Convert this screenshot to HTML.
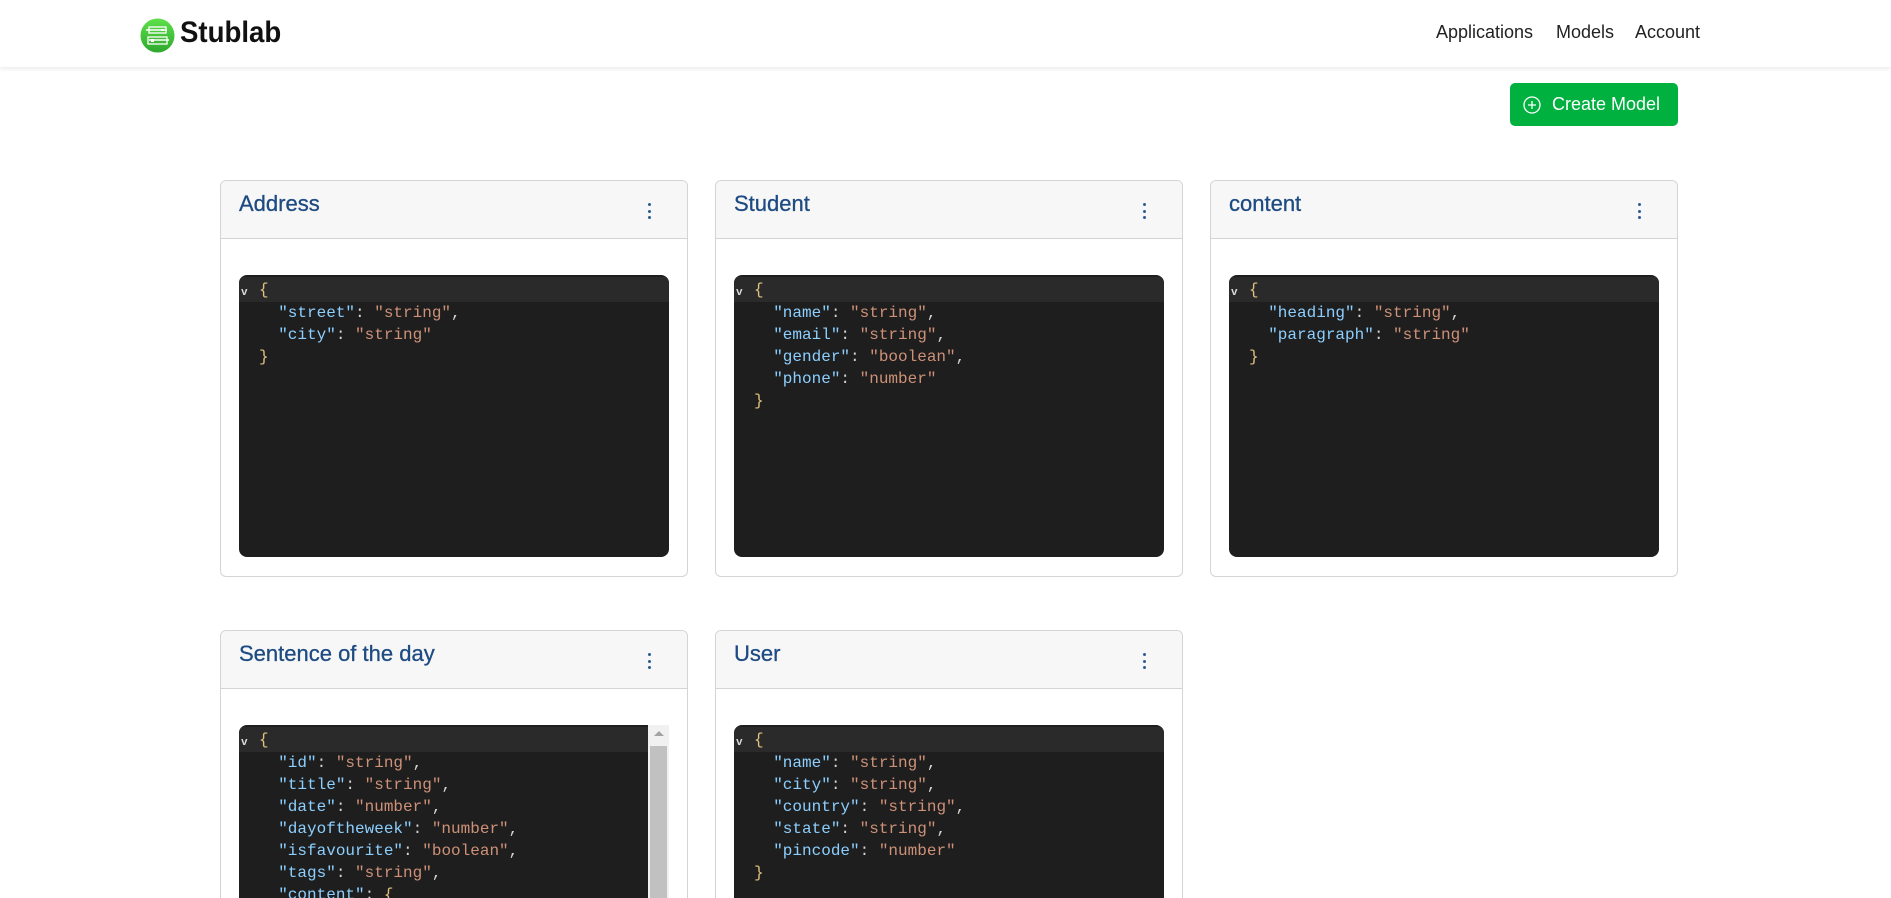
<!DOCTYPE html>
<html><head><meta charset="utf-8"><style>
*{box-sizing:border-box;margin:0;padding:0}
html,body{width:1891px;height:898px;overflow:hidden}
body{background:#fff;font-family:"Liberation Sans",sans-serif;position:relative}
.nav{position:absolute;left:0;top:0;width:1891px;height:67px;background:#fff;box-shadow:0 2px 4px rgba(0,0,0,.08)}
.brand{position:absolute;left:180px;top:16px;font-size:30px;font-weight:bold;color:#111;transform:scaleX(0.92);transform-origin:left}
.links{position:absolute;top:22px;font-size:18px;color:#222}
.btn{position:absolute;left:1510px;top:83px;width:168px;height:43px;background:#00b140;border-radius:5px;color:#fff;font-size:18px;line-height:43px}
.card{position:absolute;width:468px;border:1px solid #d4d4d4;border-radius:6px;overflow:hidden;background:#fff}
.hd{height:58px;background:#f7f7f7;border-bottom:1px solid #d4d4d4;position:relative}
.hd .t{position:absolute;left:18px;top:10px;font-size:22px;color:#1d4b82;-webkit-text-stroke:0.3px #1d4b82}
.keb{position:absolute;left:427px;top:22px;width:3px}
.keb i{display:block;width:3px;height:3px;background:#2b5c92;border-radius:50%;margin-bottom:3.5px}
.ed{position:absolute;left:18px;top:94px;width:430px;height:282px;background:#1e1e1e;border-radius:8px;overflow:hidden;font-family:"Liberation Mono","DejaVu Sans Mono",monospace;font-size:16px;color:#d4d4d4}
.hl{position:absolute;left:0;top:2px;width:100%;height:25px;background:#2a2a2a}
.ln{position:absolute;left:20px;height:22px;line-height:22px;white-space:pre}
.k{color:#8ccfff}.s{color:#ce9178}.b{color:#e0c080}
.ar{position:absolute;left:2px;top:12px;color:#ddd;font-size:11px;font-weight:bold}
</style></head><body>
<div class="nav">
<svg style="position:absolute;left:140px;top:18px" width="35" height="35" viewBox="0 0 35 35">
<defs><linearGradient id="g" x1="0" y1="0" x2="0" y2="1"><stop offset="0" stop-color="#5ee04a"/><stop offset="1" stop-color="#2ea82e"/></linearGradient></defs>
<circle cx="17.5" cy="17.5" r="17" fill="url(#g)"/>
<path d="M6 12 H27 M9 22 H29" stroke="#fff" stroke-width="1.5" fill="none"/>
<rect x="9" y="9" width="17" height="6" fill="none" stroke="#fff" stroke-width="1.3"/>
<rect x="8" y="19" width="19" height="7" fill="none" stroke="#fff" stroke-width="1.3"/>
<rect x="11" y="21" width="3" height="3" fill="#fff"/><rect x="21" y="11" width="3" height="2" fill="#fff"/>
</svg>
<div class="brand">Stublab</div>
<div class="links" style="left:1436px">Applications</div>
<div class="links" style="left:1556px">Models</div>
<div class="links" style="left:1635px">Account</div>
</div>
<div class="btn"><svg style="position:absolute;left:13px;top:13px" width="18" height="18" viewBox="0 0 18 18"><circle cx="9" cy="9" r="8" fill="none" stroke="#fff" stroke-width="1.3"/><path d="M9 5V13M5 9H13" stroke="#fff" stroke-width="1.3"/></svg><span style="position:absolute;left:42px">Create Model</span></div>

<div class="card" style="left:220px;top:180px;height:397px">
<div class="hd"><div class="t">Address</div><div class="keb"><i></i><i></i><i></i></div></div>
<div class="ed"><div class="hl"></div><div class="ar">v</div>
<div class="ln b" style="top:4px">{</div>
<div class="ln" style="top:27px">  <span class="k">"street"</span>: <span class="s">"string"</span>,</div>
<div class="ln" style="top:49px">  <span class="k">"city"</span>: <span class="s">"string"</span></div>
<div class="ln b" style="top:71px">}</div></div>
</div>

<div class="card" style="left:715px;top:180px;height:397px">
<div class="hd"><div class="t">Student</div><div class="keb"><i></i><i></i><i></i></div></div>
<div class="ed"><div class="hl"></div><div class="ar">v</div>
<div class="ln b" style="top:4px">{</div>
<div class="ln" style="top:27px">  <span class="k">"name"</span>: <span class="s">"string"</span>,</div>
<div class="ln" style="top:49px">  <span class="k">"email"</span>: <span class="s">"string"</span>,</div>
<div class="ln" style="top:71px">  <span class="k">"gender"</span>: <span class="s">"boolean"</span>,</div>
<div class="ln" style="top:93px">  <span class="k">"phone"</span>: <span class="s">"number"</span></div>
<div class="ln b" style="top:115px">}</div></div>
</div>

<div class="card" style="left:1210px;top:180px;height:397px">
<div class="hd"><div class="t">content</div><div class="keb"><i></i><i></i><i></i></div></div>
<div class="ed"><div class="hl"></div><div class="ar">v</div>
<div class="ln b" style="top:4px">{</div>
<div class="ln" style="top:27px">  <span class="k">"heading"</span>: <span class="s">"string"</span>,</div>
<div class="ln" style="top:49px">  <span class="k">"paragraph"</span>: <span class="s">"string"</span></div>
<div class="ln b" style="top:71px">}</div></div>
</div>

<div class="card" style="left:220px;top:630px;height:268px;border-bottom:none;border-radius:6px 6px 0 0">
<div class="hd"><div class="t">Sentence of the day</div><div class="keb"><i></i><i></i><i></i></div></div>
<div class="ed" style="width:409px;height:174px;border-radius:8px 0 0 0"><div class="hl"></div><div class="ar">v</div>
<div class="ln b" style="top:4px">{</div>
<div class="ln" style="top:27px">  <span class="k">"id"</span>: <span class="s">"string"</span>,</div>
<div class="ln" style="top:49px">  <span class="k">"title"</span>: <span class="s">"string"</span>,</div>
<div class="ln" style="top:71px">  <span class="k">"date"</span>: <span class="s">"number"</span>,</div>
<div class="ln" style="top:93px">  <span class="k">"dayoftheweek"</span>: <span class="s">"number"</span>,</div>
<div class="ln" style="top:115px">  <span class="k">"isfavourite"</span>: <span class="s">"boolean"</span>,</div>
<div class="ln" style="top:137px">  <span class="k">"tags"</span>: <span class="s">"string"</span>,</div>
<div class="ln" style="top:159px">  <span class="k">"content"</span>: <span class="b">{</span></div></div>
<div style="position:absolute;left:427px;top:94px;width:21px;height:174px;background:#f1f1f1">
<div style="position:absolute;left:6px;top:6px;width:0;height:0;border-left:5px solid transparent;border-right:5px solid transparent;border-bottom:5px solid #a3a3a3"></div>
<div style="position:absolute;left:2px;top:21px;width:17px;height:153px;background:#c1c1c1"></div></div>
</div>

<div class="card" style="left:715px;top:630px;height:268px;border-bottom:none;border-radius:6px 6px 0 0">
<div class="hd"><div class="t">User</div><div class="keb"><i></i><i></i><i></i></div></div>
<div class="ed" style="height:174px;border-radius:8px 8px 0 0"><div class="hl"></div><div class="ar">v</div>
<div class="ln b" style="top:4px">{</div>
<div class="ln" style="top:27px">  <span class="k">"name"</span>: <span class="s">"string"</span>,</div>
<div class="ln" style="top:49px">  <span class="k">"city"</span>: <span class="s">"string"</span>,</div>
<div class="ln" style="top:71px">  <span class="k">"country"</span>: <span class="s">"string"</span>,</div>
<div class="ln" style="top:93px">  <span class="k">"state"</span>: <span class="s">"string"</span>,</div>
<div class="ln" style="top:115px">  <span class="k">"pincode"</span>: <span class="s">"number"</span></div>
<div class="ln b" style="top:137px">}</div></div>
</div>
</body></html>
